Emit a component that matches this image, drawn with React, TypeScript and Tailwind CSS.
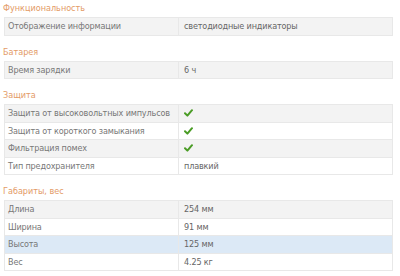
import React from "react";

type Row = { label: string; value?: string; check?: boolean; highlight?: boolean };
type Section = { title: string; rows: Row[] };

const sections: Section[] = [
  { title: "Функциональность", rows: [{ label: "Отображение информации", value: "светодиодные индикаторы" }] },
  { title: "Батарея", rows: [{ label: "Время зарядки", value: "6 ч" }] },
  {
    title: "Защита",
    rows: [
      { label: "Защита от высоковольтных импульсов", check: true },
      { label: "Защита от короткого замыкания", check: true },
      { label: "Фильтрация помех", check: true },
      { label: "Тип предохранителя", value: "плавкий" },
    ],
  },
  {
    title: "Габариты, вес",
    rows: [
      { label: "Длина", value: "254 мм" },
      { label: "Ширина", value: "91 мм" },
      { label: "Высота", value: "125 мм", highlight: true },
      { label: "Вес", value: "4.25 кг" },
    ],
  },
];

function Check() {
  return (
    <svg width="9" height="8" viewBox="0 0 9 8" className="block">
      <path d="M1 4.2 L3.4 6.6 L8 1.2" fill="none" stroke="#4a9c25" strokeWidth="2" strokeLinecap="round" strokeLinejoin="round" />
    </svg>
  );
}

export default function App() {
  return (
    <div className="w-[400px] h-[276px] bg-white overflow-hidden pl-[4px] pr-[7px] text-[9px] tracking-[-0.15px] text-[#777]" style={{ fontFamily: '"DejaVu Sans Condensed", "Liberation Sans", Arial, sans-serif' }}>
      {sections.map((s, i) => (
        <div key={s.title} className={i === 0 ? "" : "mt-[8px]"}>
          <div className="h-[16px] leading-[16px] mb-px -ml-px tracking-normal text-[#e39a66]">{s.title}</div>
          <div className="border-t border-l border-r border-[#e8e8e8]">
            {s.rows.map((r, j) => (
              <div
                key={r.label}
                className={
                  "flex h-[17.5px] border-b border-[#e8e8e8] " +
                  (r.highlight ? "bg-[#dce9f6]" : j % 2 === 0 ? "bg-[#f3f3f3]" : "bg-white")
                }
              >
                <div className="w-[174px] shrink-0 border-r border-[#e8e8e8] pl-[3px] leading-[16.5px] whitespace-nowrap">{r.label}</div>
                <div className="flex-1 pl-[5px] leading-[16.5px] flex items-center">
                  {r.check ? <Check /> : <span className="text-[#666]">{r.value}</span>}
                </div>
              </div>
            ))}
          </div>
        </div>
      ))}
    </div>
  );
}
